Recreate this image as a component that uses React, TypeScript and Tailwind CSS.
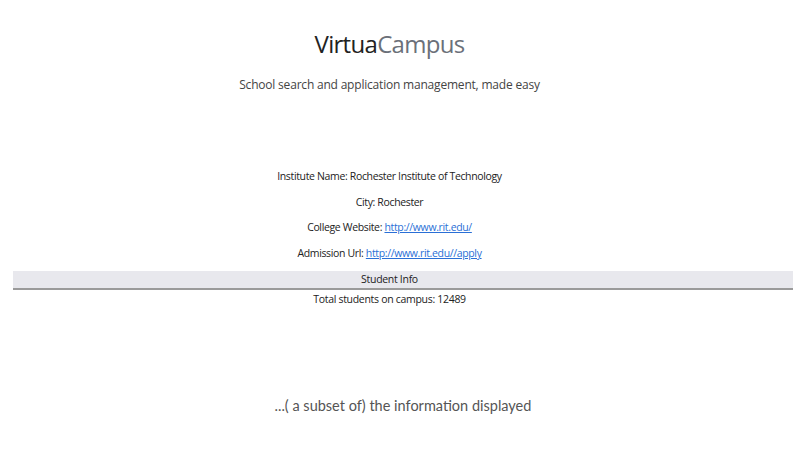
export default function App() {
  const details = [
    { label: 'Institute Name', value: 'Rochester Institute of Technology' },
    { label: 'City', value: 'Rochester' },
    { label: 'College Website', value: 'http://www.rit.edu/', link: true },
    { label: 'Admission Url', value: 'http://www.rit.edu//apply', link: true },
  ];

  return (
    <div className="w-[806px] h-[454px] bg-white text-[#222] font-['Open_Sans',sans-serif] overflow-hidden">
      <header className="flex flex-col items-center pt-[26px] pr-[27px]">
        <h1 className="text-[24px] leading-[36px] tracking-[-0.7px]">
          <span className="text-[#222]">Virtua</span>
          <span className="text-[#6b7079]">Campus</span>
        </h1>
        <p className="mt-[14px] text-[12px] leading-[18px] tracking-[-0.2px] text-[#444]">
          School search and application management, made easy
        </p>
      </header>

      <section className="mt-[74px] pr-[27px] flex flex-col items-center gap-[8px] text-[10.5px] leading-[17.5px] tracking-[-0.35px]">
        {details.map((d) => (
          <p key={d.label}>
            {d.label}:{' '}
            {d.link ? (
              <a href={d.value} className="text-[#2a6fd6] underline">
                {d.value}
              </a>
            ) : (
              d.value
            )}
          </p>
        ))}
      </section>

      <section className="mt-[9px] px-[13px] text-[10.5px] tracking-[-0.3px]">
        <div className="bg-[#e8e8ed] border-b-2 border-[#9a9a9a] h-[19px] pr-[27px] flex items-center justify-center">
          Student Info
        </div>
        <p className="text-center leading-[18px] pr-[27px]">Total students on campus: 12489</p>
      </section>

      <p className="mt-[88px] text-center font-['Lato',sans-serif] text-[14.5px] leading-[20px] text-[#555]">
        ...( a subset of) the information displayed
      </p>
    </div>
  );
}
